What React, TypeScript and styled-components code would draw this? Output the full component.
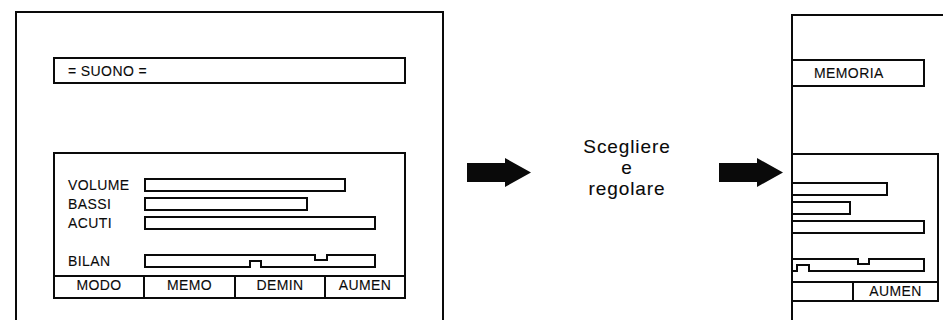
import styled, { createGlobalStyle } from "styled-components"

const GlobalStyle = createGlobalStyle`
  body {
    margin: 0;
    background: #fff;
  }
  * {
    box-sizing: border-box;
  }
`

const INK = "#0a0a0a"

const Page = styled.div`
  display: flex;
  align-items: flex-start;
  width: 943px;
  height: 320px;
  overflow: hidden;
  background: #fff;
  font-family: "Liberation Sans", Arial, Helvetica, sans-serif;
  color: ${INK};
  -webkit-text-stroke: 0.1px ${INK};
`

type FrameProps = {
  $top: number
  $left: number
  $width: number
  $padTop: number
  $padLeft: number
  $open?: boolean
}

const Frame = styled.div<FrameProps>`
  flex: none;
  margin-top: ${p => p.$top}px;
  margin-left: ${p => p.$left}px;
  width: ${p => p.$width}px;
  height: 330px;
  border: 2px solid ${INK};
  border-bottom: none;
  ${p => p.$open && "border-right: none;"}
  padding: ${p => p.$padTop}px 0 0 ${p => p.$padLeft}px;
  display: flex;
  flex-direction: column;
  align-items: flex-start;
`

const TitleBox = styled.div<{ $w: number; $h: number; $inset: number; $flush?: boolean }>`
  width: ${p => p.$w}px;
  height: ${p => p.$h}px;
  border: 2px solid ${INK};
  ${p => p.$flush && "border-left: none;"}
  padding-left: ${p => p.$inset}px;
  display: flex;
  align-items: center;
  font-size: 14px;
  letter-spacing: 0.4px;
`

const Screen = styled.div<{ $w: number; $h: number; $gap: number; $flush?: boolean }>`
  margin-top: ${p => p.$gap}px;
  width: ${p => p.$w}px;
  height: ${p => p.$h}px;
  border: 2px solid ${INK};
  ${p => p.$flush && "border-left: none;"}
  display: flex;
  flex-direction: column;
`

const Rows = styled.div<{ $padTop: number; $padLeft: number }>`
  flex: 1;
  padding: ${p => p.$padTop}px 0 0 ${p => p.$padLeft}px;
  display: flex;
  flex-direction: column;
`

const Row = styled.div`
  display: flex;
  align-items: flex-start;
  height: 19px;
  font-size: 14px;
  line-height: 19px;
  letter-spacing: 0.4px;
`

const Spacer = styled.div`
  height: 19px;
`

const Label = styled.span`
  width: 76px;
  flex: none;
`

const Bar = styled.div<{ $w: number; $open?: boolean }>`
  flex: none;
  margin-top: 2px;
  width: ${p => p.$w}px;
  height: 14px;
  border: 2px solid ${INK};
  ${p => p.$open && "border-left: none;"}
`

const BalanceSvg = styled.svg`
  flex: none;
  margin-top: 2px;
  display: block;
`

const KeyRow = styled.div<{ $cols: string; $h: number }>`
  display: grid;
  grid-template-columns: ${p => p.$cols};
  height: ${p => p.$h}px;
  border-top: 2px solid ${INK};
`

const SoftKey = styled.div<{ $first?: boolean }>`
  ${p => !p.$first && `border-left: 2px solid ${INK};`}
  text-align: center;
  font-size: 14px;
  line-height: 17px;
  letter-spacing: 0.4px;
`

const Middle = styled.div`
  flex: none;
  width: 347px;
  display: flex;
  align-items: flex-start;
  padding-top: 136px;
`

const ArrowSvg = styled.svg<{ $ml: number }>`
  flex: none;
  display: block;
  margin-left: ${p => p.$ml}px;
  margin-top: 22px;
`

const Caption = styled.div`
  flex: none;
  width: 110px;
  margin-left: 41px;
  text-align: center;
  font-size: 19px;
  line-height: 21px;
  letter-spacing: 0.9px;
`

function Arrow({ ml }: { ml: number }) {
  return (
    <ArrowSvg $ml={ml} width="64" height="29" viewBox="0 0 64 29">
      <polygon points="0,5 38,5 38,0 64,14.5 38,29 38,24 0,24" fill={INK} />
    </ArrowSvg>
  )
}

type BalanceProps = {
  w: number
  bump: [number, number]
  notch: [number, number]
  open?: boolean
}

// balance bar: raised marker on the lower edge, dip on the upper edge
function Balance({ w, bump, notch, open }: BalanceProps) {
  const x0 = open ? 0 : 1
  const r = w - 1
  const d = open
    ? `M${x0} 1 H${notch[0]} V6 H${notch[1]} V1 H${r} V13 H${bump[1]} V7 H${bump[0]} V13 H0`
    : `M${x0} 1 H${notch[0]} V6 H${notch[1]} V1 H${r} V13 H${bump[1]} V7 H${bump[0]} V13 H${x0} Z`
  return (
    <BalanceSvg width={w} height="14" viewBox={`0 0 ${w} 14`}>
      <path d={d} fill="none" stroke={INK} strokeWidth="2" />
    </BalanceSvg>
  )
}

export default function App() {
  return (
    <>
      <GlobalStyle />
      <Page>
        <Frame $top={11} $left={15} $width={429} $padTop={44} $padLeft={36}>
          <TitleBox $w={353} $h={27} $inset={13}>= SUONO =</TitleBox>
          <Screen $w={353} $h={147} $gap={68}>
            <Rows $padTop={22} $padLeft={13}>
              <Row>
                <Label>VOLUME</Label>
                <Bar $w={202} />
              </Row>
              <Row>
                <Label>BASSI</Label>
                <Bar $w={164} />
              </Row>
              <Row>
                <Label>ACUTI</Label>
                <Bar $w={232} />
              </Row>
              <Spacer />
              <Row>
                <Label>BILAN</Label>
                <Balance w={232} bump={[106, 117]} notch={[171, 183]} />
              </Row>
            </Rows>
            <KeyRow $cols="88px 91px 90px 1fr" $h={22}>
              <SoftKey $first>MODO</SoftKey>
              <SoftKey>MEMO</SoftKey>
              <SoftKey>DEMIN</SoftKey>
              <SoftKey>AUMEN</SoftKey>
            </KeyRow>
          </Screen>
        </Frame>

        <Middle>
          <Arrow ml={23} />
          <Caption>
            Scegliere
            <br />e<br />
            regolare
          </Caption>
          <Arrow ml={37} />
        </Middle>

        <Frame $top={14} $left={0} $width={170} $padTop={43} $padLeft={0} $open>
          <TitleBox $w={132} $h={28} $inset={21} $flush>MEMORIA</TitleBox>
          <Screen $w={146} $h={149} $gap={66} $flush>
            <Rows $padTop={25} $padLeft={0}>
              <Row>
                <Bar $w={95} $open />
              </Row>
              <Row>
                <Bar $w={58} $open />
              </Row>
              <Row>
                <Bar $w={132} $open />
              </Row>
              <Spacer />
              <Row>
                <Balance w={132} bump={[4, 16]} notch={[65, 76]} open />
              </Row>
            </Rows>
            <KeyRow $cols="59px 1fr" $h={19}>
              <SoftKey $first />
              <SoftKey>AUMEN</SoftKey>
            </KeyRow>
          </Screen>
        </Frame>
      </Page>
    </>
  )
}
